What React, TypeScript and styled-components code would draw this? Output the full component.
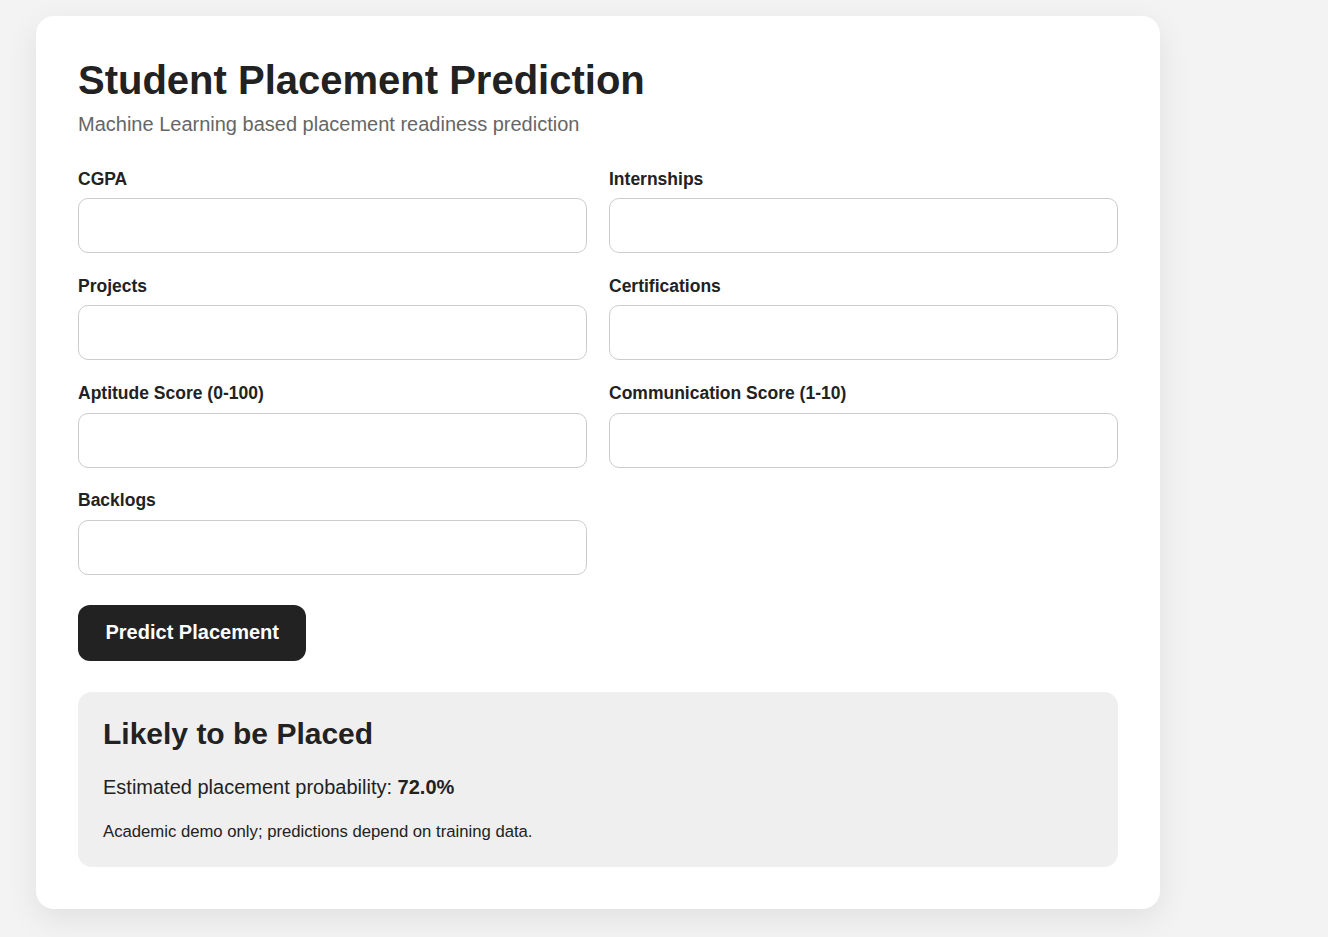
import React from "react";
import styled, { createGlobalStyle } from "styled-components";

const GlobalStyle = createGlobalStyle`
  html, body {
    margin: 0;
    padding: 0;
    background: #f3f3f3;
    font-family: "Liberation Sans", Arial, sans-serif;
    color: #222;
  }
  * { box-sizing: border-box; }
`;

const Page = styled.div`
  padding: 16px 36px 40px;
  min-height: 937px;
`;

const Card = styled.main`
  width: 1124px;
  background: #fff;
  border-radius: 18px;
  padding: 42px;
  box-shadow: 0 10px 32px rgba(0, 0, 0, 0.08);
`;

const Title = styled.h1`
  margin: 0;
  font-size: 40px;
  font-weight: 700;
  line-height: normal;
  color: #222;
`;

const Subtitle = styled.p`
  margin: 10px 0 0;
  font-size: 20px;
  line-height: normal;
  color: #666;
`;

const FormGrid = styled.form`
  margin-top: 32.5px;
  display: grid;
  grid-template-columns: 1fr 1fr;
  column-gap: 22px;
  row-gap: 22.8px;
`;

const Field = styled.div`
  display: flex;
  flex-direction: column;
`;

const Label = styled.label`
  font-size: 17.5px;
  font-weight: 700;
  line-height: normal;
  margin-bottom: 8.5px;
  color: #222;
`;

const Input = styled.input`
  height: 55px;
  width: 100%;
  border: 1px solid #cccccc;
  border-radius: 10px;
  padding: 0 14px;
  font-size: 18px;
  font-family: inherit;
  background: #fff;
  outline: none;
`;

const Button = styled.button`
  margin-top: 30px;
  height: 56px;
  padding: 0 27.5px;
  border: none;
  border-radius: 12px;
  background: #222;
  color: #fff;
  font-family: inherit;
  font-size: 20px;
  font-weight: 700;
  cursor: pointer;
`;

const Result = styled.section`
  margin-top: 31px;
  background: #efefef;
  border-radius: 14px;
  padding: 25px 25px 25px;
`;

const ResultTitle = styled.h2`
  margin: 0;
  font-size: 30px;
  font-weight: 700;
  line-height: normal;
  color: #222;
`;

const Probability = styled.p`
  margin: 25px 0 0;
  font-size: 20px;
  line-height: normal;
  color: #222;
`;

const Note = styled.p`
  margin: 23px 0 0;
  font-size: 16.7px;
  line-height: normal;
  color: #222;
`;

const fields = [
  "CGPA",
  "Internships",
  "Projects",
  "Certifications",
  "Aptitude Score (0-100)",
  "Communication Score (1-10)",
  "Backlogs",
];

export default function App() {
  return (
    <>
      <GlobalStyle />
      <Page>
        <Card>
          <Title>Student Placement Prediction</Title>
          <Subtitle>Machine Learning based placement readiness prediction</Subtitle>
          <FormGrid onSubmit={(e) => e.preventDefault()}>
            {fields.map((f, i) => (
              <Field key={f}>
                <Label htmlFor={`f${i}`}>{f}</Label>
                <Input id={`f${i}`} type="number" />
              </Field>
            ))}
          </FormGrid>
          <Button type="button">Predict Placement</Button>
          <Result>
            <ResultTitle>Likely to be Placed</ResultTitle>
            <Probability>
              Estimated placement probability: <strong>72.0%</strong>
            </Probability>
            <Note>Academic demo only; predictions depend on training data.</Note>
          </Result>
        </Card>
      </Page>
    </>
  );
}
